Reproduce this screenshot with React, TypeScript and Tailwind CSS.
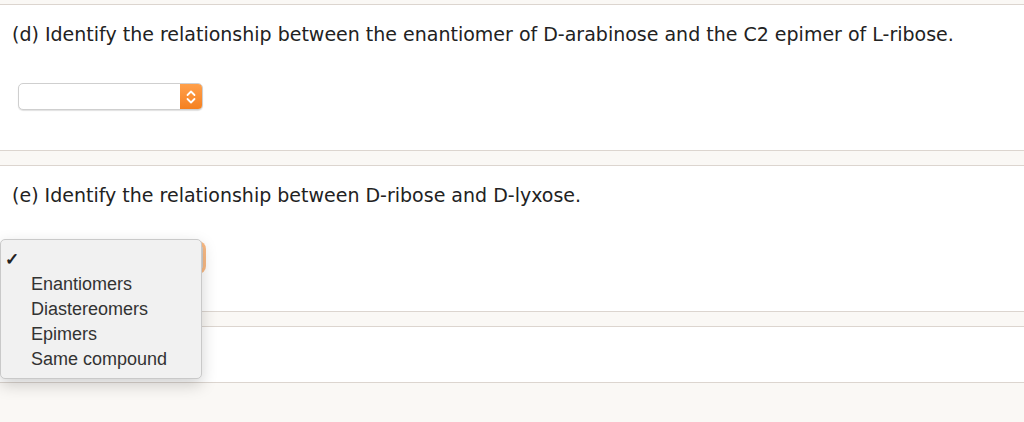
import { useState } from "react";

const OPTIONS = ["Enantiomers", "Diastereomers", "Epimers", "Same compound"];

function Chevrons() {
  return (
    <svg width="10" height="16" viewBox="0 0 10 16" fill="none" aria-hidden="true">
      <path d="M1.5 6 L5 2.5 L8.5 6" stroke="white" strokeWidth="1.8" strokeLinecap="round" strokeLinejoin="round" />
      <path d="M1.5 10 L5 13.5 L8.5 10" stroke="white" strokeWidth="1.8" strokeLinecap="round" strokeLinejoin="round" />
    </svg>
  );
}

function SelectBox({ focused }: { focused?: boolean }) {
  return (
    <div
      className={`flex h-[27px] w-[185px] overflow-hidden rounded-[5px] border border-[#cfcfcf] bg-white ${
        focused ? "shadow-[0_0_0_3px_rgba(247,140,50,0.6)]" : "shadow-[0_1px_1px_rgba(0,0,0,0.12)]"
      }`}
    >
      <div className="flex-1" />
      <div className="flex w-[22px] items-center justify-center bg-gradient-to-b from-[#ffa04a] to-[#f5801e]">
        <Chevrons />
      </div>
    </div>
  );
}

function Question({ label, text, focused }: { label: string; text: string; focused?: boolean }) {
  return (
    <section className="h-[147px] border-y border-[#dcd5cf] bg-white pl-[12px] pt-[16px]">
      <p className="text-[19px] leading-[26px] text-[#222]">
        ({label}) {text}
      </p>
      <div className="ml-[6px] mt-[36px]">
        <SelectBox focused={focused} />
      </div>
    </section>
  );
}

export default function App() {
  const [selected] = useState("");

  return (
    <div
      className="relative min-h-screen bg-[#faf8f5] pt-[4px]"
      style={{ fontFamily: '"DejaVu Sans", Verdana, sans-serif' }}
    >
      <Question
        label="d"
        text="Identify the relationship between the enantiomer of D-arabinose and the C2 epimer of L-ribose."
      />
      <div className="h-[14px]" />
      <Question label="e" text="Identify the relationship between D-ribose and D-lyxose." focused />
      <div className="h-[14px]" />
      <section className="h-[57px] border-y border-[#dcd5cf] bg-white" />

      <div
        className="absolute left-0 top-[239px] w-[202px] rounded-[5px] border border-[#c9c9c9] bg-[#f1f1f1] pb-[6px] pt-[7px] shadow-[0_6px_16px_rgba(0,0,0,0.18)]"
        style={{ fontFamily: '"Liberation Sans", Arial, sans-serif' }}
      >
        <div className="flex h-[25px] items-center pl-[4px] text-[17px] font-bold text-[#222]">
          {selected === "" ? "✓" : ""}
        </div>
        {OPTIONS.map((o) => (
          <div key={o} className="flex h-[25px] items-center pl-[30px] text-[18px] text-[#333]">
            {o}
          </div>
        ))}
      </div>
    </div>
  );
}
